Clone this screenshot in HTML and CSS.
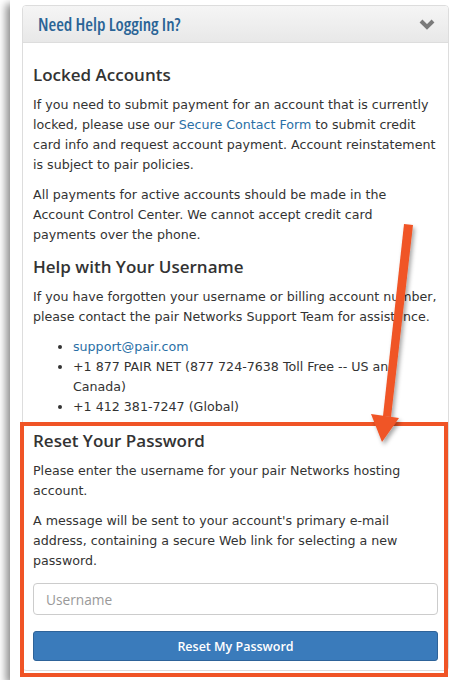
FILE: index.html
```html
<!DOCTYPE html>
<html lang="en">
<head>
    <meta charset="UTF-8">
    <meta name="viewport" content="width=device-width, initial-scale=1.0">
    <title>Need Help Logging In?</title>
    <link rel="stylesheet" href="styles.css">
</head>
<body>
    <div class="shot">
        <div class="panel">
            <div class="panel-heading">
                <h4 class="panel-title">Need Help Logging In?</h4>
                <svg class="chevron" width="16" height="12" viewBox="0 0 16 12">
                    <polyline points="2,3 8,9 14,3" fill="none" stroke="#7a7a7a" stroke-width="4" stroke-linejoin="miter"/>
                </svg>
            </div>
            <div class="panel-body">
                <h3>Locked Accounts</h3>
                <p>If you need to submit payment for an account that is currently locked, please use our <a href="#">Secure Contact Form</a> to submit credit card info and request account payment. Account reinstatement is subject to pair policies.</p>
                <p>All payments for active accounts should be made in the Account Control Center. We cannot accept credit card payments over the phone.</p>

                <h3>Help with Your Username</h3>
                <p>If you have forgotten your username or billing account number, please contact the pair Networks Support Team for assistance.</p>
                <ul>
                    <li><a href="#">support@pair.com</a></li>
                    <li>+1 877 PAIR NET (877 724-7638 Toll Free -- US and Canada)</li>
                    <li>+1 412 381-7247 (Global)</li>
                </ul>

                <div class="reset">
                    <h3>Reset Your Password</h3>
                    <p>Please enter the username for your pair Networks hosting account.</p>
                    <p>A message will be sent to your account's primary e-mail address, containing a secure Web link for selecting a new password.</p>
                    <form class="reset-form">
                        <input type="text" class="form-control" placeholder="Username">
                        <button type="button" class="btn-primary">Reset My Password</button>
                    </form>
                </div>
            </div>
        </div>

        <!-- callout drawn on top of the panel -->
        <div class="callout-box"></div>
        <svg class="callout-arrow" width="447" height="680" viewBox="0 0 447 680">
            <defs>
                <filter id="arrowShadow" x="-50%" y="-10%" width="200%" height="120%">
                    <feDropShadow dx="2" dy="3" stdDeviation="2" flood-color="#000" flood-opacity="0.35"/>
                </filter>
            </defs>
            <g filter="url(#arrowShadow)" fill="#f05426">
                <polygon points="394,224 403,225 381,417 373,416"/>
                <polygon points="361,414 389,418 372,442"/>
            </g>
        </svg>
    </div>
</body>
</html>
```

FILE: styles.css
```css
:root {
    --link-color: #2a6fa6;
    --text-color: #333333;
    --border-color: #dddddd;
    --callout: #f05426;
}

* {
    margin: 0;
    padding: 0;
    box-sizing: border-box;
}

body {
    background: #ffffff;
    font-family: 'DejaVu Sans', sans-serif;
    font-size: 12.65px;
    line-height: 20px;
    color: var(--text-color);
}

.shot {
    position: relative;
    width: 447px;
    height: 680px;
    margin-left: 10px;
    background: #ffffff;
    box-shadow: -4px 4px 8px rgba(0, 0, 0, 0.45);
    overflow: hidden;
}

.panel {
    width: 427px;
    margin: 5px 0 0 12px;
    border: 1px solid var(--border-color);
    border-radius: 4px;
    background: #ffffff;
}

.panel-heading {
    display: flex;
    align-items: center;
    justify-content: space-between;
    height: 37px;
    padding: 0 13px 0 15px;
    background: linear-gradient(#f5f5f5, #e8e8e8);
    border-bottom: 1px solid var(--border-color);
    border-radius: 3px 3px 0 0;
}

.panel-title {
    font-family: 'Open Sans', sans-serif;
    font-size: 17.7px;
    font-weight: 600;
    font-stretch: 75%;
    color: #2a6496;
}

.chevron {
    display: block;
}

.panel-body {
    padding: 10px 9px 9px 10px;
}

h3 {
    font-family: 'Open Sans', sans-serif;
    font-size: 17px;
    font-weight: 600;
    font-stretch: 92%;
    line-height: 20px;
    margin: 12px 0 10px;
    color: var(--text-color);
}

p {
    margin-bottom: 10px;
}

a {
    color: var(--link-color);
    text-decoration: none;
}

ul {
    padding-left: 40px;
    margin-bottom: 14px;
}

.reset p:last-of-type {
    margin-bottom: 12px;
}

.reset-form {
    display: flex;
    flex-direction: column;
    gap: 16px;
    width: 405px;
}

.form-control {
    height: 32px;
    padding: 0 12px;
    border: 1px solid #cccccc;
    border-radius: 4px;
    font-family: 'Open Sans', sans-serif;
    font-size: 13.7px;
    color: var(--text-color);
}

.form-control::placeholder {
    color: #999999;
}

.btn-primary {
    height: 30px;
    background: #3a7bbb;
    border: 1px solid #2e6399;
    border-radius: 3px;
    color: #ffffff;
    font-family: 'Open Sans', sans-serif;
    font-size: 12.5px;
    font-weight: 600;
    font-stretch: 90%;
}

.callout-box {
    position: absolute;
    left: 10px;
    top: 422px;
    width: 428px;
    height: 255px;
    border: 4px solid var(--callout);
}

.callout-arrow {
    position: absolute;
    left: 0;
    top: 0;
    pointer-events: none;
}
```
